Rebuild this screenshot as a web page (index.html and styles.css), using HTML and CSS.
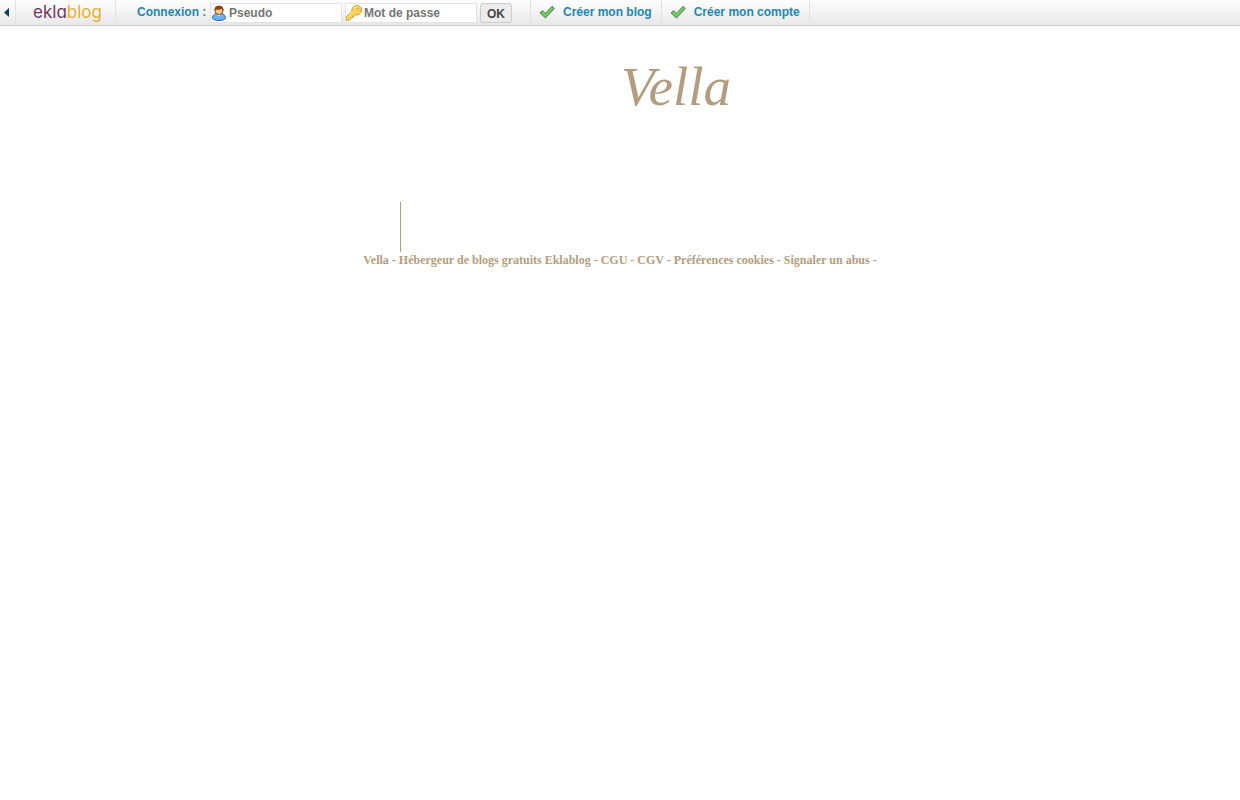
FILE: index.html
```html
<!DOCTYPE html>
<html lang="fr">
  <head>
    <meta charset="UTF-8" />
    <meta name="viewport" content="width=device-width, initial-scale=1.0" />
    <title>Vella</title>
    <link rel="stylesheet" href="styles.css">
  </head>
  <body>
    <nav class="topbar">
      <button type="button" class="toggle" aria-label="Masquer la barre">
        <svg width="5" height="9" viewBox="0 0 5 9"><path d="M5 0v9L0 4.5z" fill="#0b4257" /></svg>
      </button>
      <a href="#" class="logo">ekla<span>blog</span></a>

      <form class="login">
        <span class="login-title">Connexion :</span>
        <label class="field" aria-label="Pseudo">
          <svg width="16" height="16" viewBox="0 0 16 16">
            <path d="M1.500 13.500C1.500 10 4 8 8 8s6.500 2 6.500 5.500c-1 1.300-3 2-6.500 2s-5.500-.7-6.500-2z" fill="#6bb0f5" stroke="#2863b8" />
            <path d="M5.500 8.500 8 11.500l2.500-3z" fill="#e6f2ff" />
            <circle cx="8" cy="5.500" r="4" fill="#fbc78f" stroke="#8c4a1d" />
            <path d="M3.500 6C3 2.500 5 .8 8 .8S13 2.500 12.500 6C11.500 5.500 11 4.500 10.500 3.800 9 5 6 4.800 5 4.500z" fill="#8f3f13" />
          </svg>
          <input type="text" placeholder="Pseudo" />
        </label>
        <label class="field" aria-label="Mot de passe">
          <svg width="16" height="16" viewBox="0 0 16 16">
            <path d="M6 3.500 9 .7h4l2.300 2.300v4L12.500 9.800H9.500L8 11.300H6.800v1.500H5.300L3.500 15.300H.7v-4L6 6.500z" fill="#fbd64e" stroke="#cf9630" />
            <path d="M7 6.500 1.800 11.800M7.500 3.800 9.500 1.800h3" fill="none" stroke="#fff3a8" />
            <circle cx="12" cy="4" r="1.200" fill="#fff" stroke="#cf9630" stroke-width=".8" />
          </svg>
          <input type="password" placeholder="Mot de passe" />
        </label>
        <button type="submit" class="ok">OK</button>
      </form>

      <a href="#" class="create">
        <svg width="16" height="16" viewBox="0 0 16 16"><path d="M1 9 3.500 6.500l3 2.800L13 2.300l2.300 2.200L6.500 14z" fill="#67bd5b" stroke="#4a9350" /><path d="M3 8.500 6.300 11.500l7-7.500" fill="none" stroke="#95d883" /></svg>
        Créer mon blog
      </a>
      <a href="#" class="create">
        <svg width="16" height="16" viewBox="0 0 16 16"><path d="M1 9 3.500 6.500l3 2.800L13 2.300l2.300 2.200L6.500 14z" fill="#67bd5b" stroke="#4a9350" /><path d="M3 8.500 6.300 11.500l7-7.500" fill="none" stroke="#95d883" /></svg>
        Créer mon compte
      </a>
    </nav>

    <div class="container">
      <header>
        <h1><a href="#">Vella</a></h1>
      </header>
      <main class="content"></main>
    </div>

    <footer>
      <a href="#">Vella</a> -
      <a href="#">Hébergeur de blogs gratuits Eklablog</a> -
      <a href="#">CGU</a> -
      <a href="#">CGV</a> -
      <a href="#">Préférences cookies</a> -
      <a href="#">Signaler un abus</a> -
    </footer>
  </body>
</html>
```
FILE: styles.css
```css
* {
  box-sizing: border-box;
}

body {
  margin: 0;
  background: #fefefe;
  color: #b39d80;
  font-family: "Liberation Serif", "Times New Roman", serif;
}

a {
  color: inherit;
  text-decoration: none;
}

.topbar {
  display: flex;
  height: 26px;
  border-bottom: 1px solid #cccccc;
  background: linear-gradient(#fefefe, #e8e8e8);
  font: bold 12px/24px "Liberation Sans", Arial, sans-serif;
  color: #1f87b0;
  white-space: nowrap;
}

.toggle {
  display: flex;
  align-items: center;
  width: 16px;
  padding: 0 0 0 4px;
  border: none;
  border-right: 1px solid #e2e2e2;
  background: none;
  cursor: pointer;
}

.logo {
  width: 100px;
  padding-left: 4px;
  border-right: 1px solid #e2e2e2;
  font: 400 17px/24px Inter, sans-serif;
  font-feature-settings: "cv11";
  text-align: center;
  color: #6d3566;
}

.logo span {
  color: #e3b130;
}

.login {
  display: flex;
  gap: 3px;
  padding: 0 18px 0 21px;
  border-right: 1px solid #e2e2e2;
}

.login-title {
  width: 70px;
}

.field {
  display: flex;
  align-items: center;
  width: 132px;
  height: 20px;
  margin-top: 3px;
  border: 1px solid #e2e2e2;
  background: #fff;
}

.field input {
  flex: 1;
  min-width: 0;
  padding: 0 2px;
  border: none;
  outline: none;
  background: none;
  font: inherit;
  line-height: 18px;
}

.field input::placeholder {
  color: #757575;
}

.ok {
  width: 32px;
  height: 20px;
  margin-top: 3px;
  padding: 0;
  border: 1px solid #cccccc;
  border-radius: 3px;
  background: #ececec;
  color: #444;
  font: inherit;
  line-height: 20px;
  cursor: pointer;
}

.create {
  display: flex;
  gap: 8px;
  padding: 0 9px 0 8px;
  border-right: 1px solid #e2e2e2;
}

.create svg {
  margin-top: 4px;
}

.container {
  max-width: 440px;
  margin: 0 auto;
}

header {
  height: 176px;
  padding: 29px 0 0 112px;
  text-align: center;
}

h1 {
  margin: 0;
  font-size: 55px;
  font-style: italic;
  font-weight: normal;
  line-height: 64px;
}

.content {
  min-height: 50px;
  border-left: 1px solid #b39d80;
}

footer {
  font-size: 12px;
  font-weight: bold;
  line-height: 16px;
  text-align: center;
}
```
